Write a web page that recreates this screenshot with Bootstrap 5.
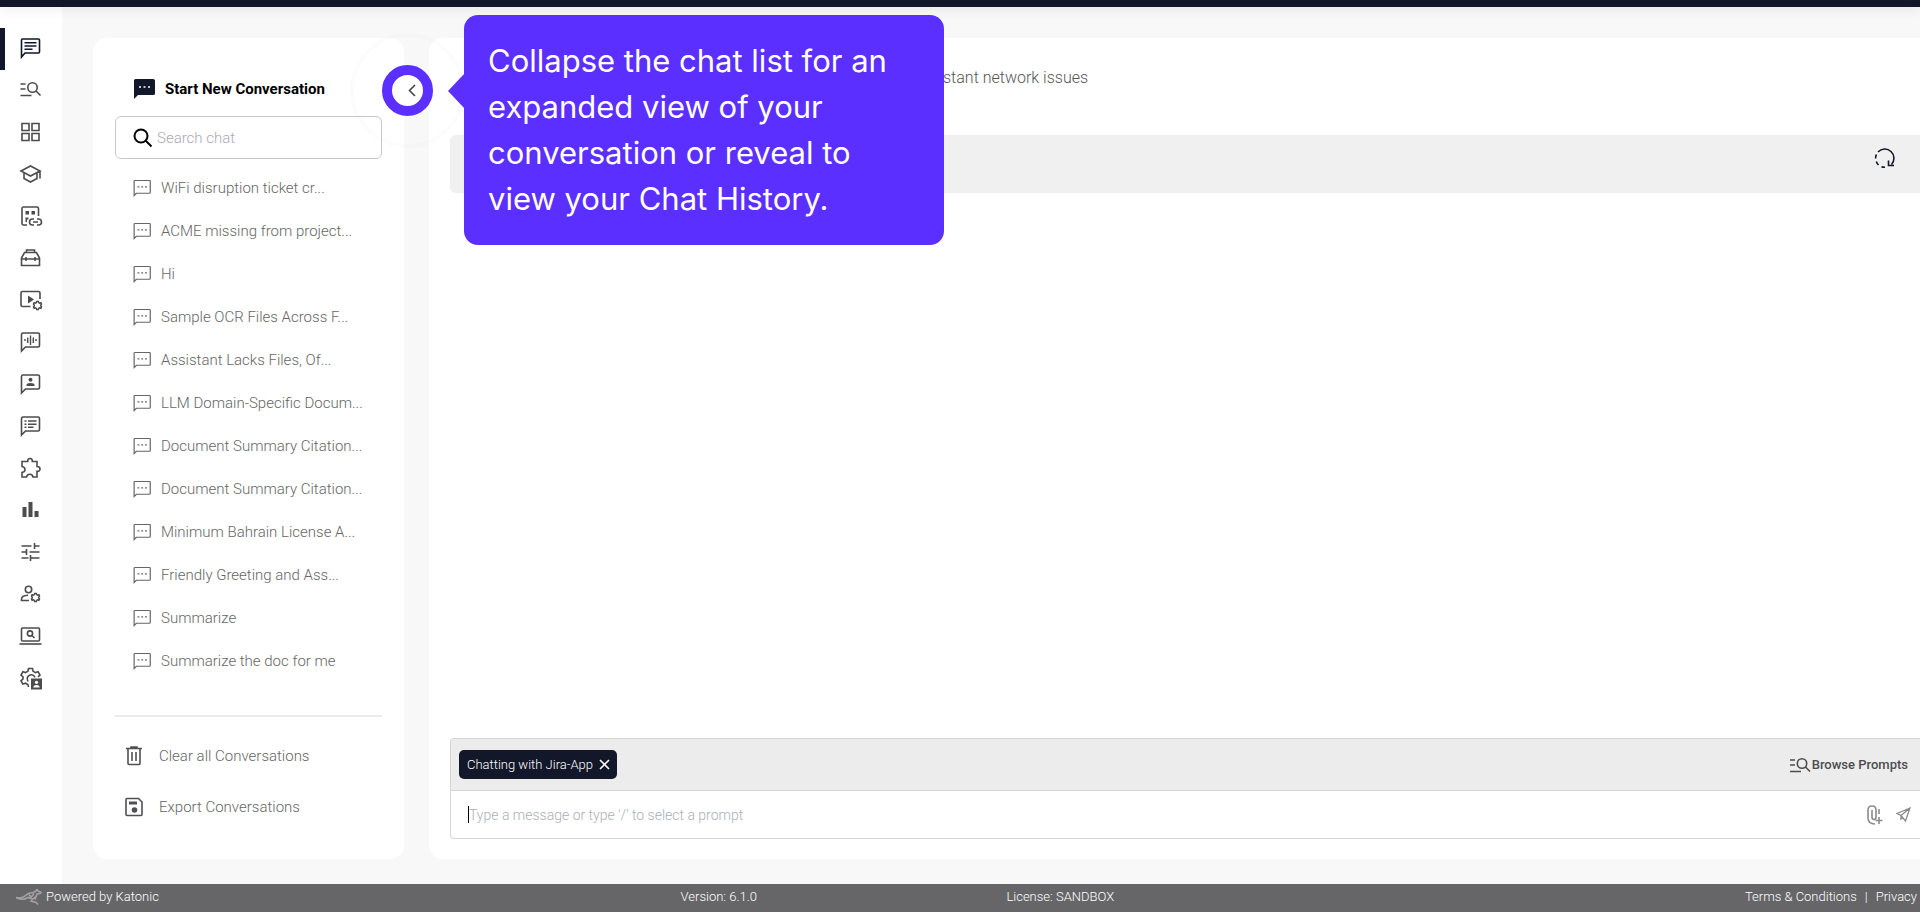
<!DOCTYPE html>
<html lang="en">
<head>
<meta charset="utf-8">
<meta name="viewport" content="width=device-width, initial-scale=1">
<title>Katonic Chat</title>
<link href="https://cdn.jsdelivr.net/npm/bootstrap@5.3.0/dist/css/bootstrap.min.css" rel="stylesheet">
<style>
:root { --ink: #12172a; --accent: #5b2fff; }
body { font-family: Roboto, "Liberation Sans", sans-serif; font-weight: 300; font-size: 15px; line-height: 20px; background: #f8f8f8; color: #555; overflow-x: hidden; }
svg { display: block; flex: none; fill: none; stroke: currentColor; stroke-width: 1.6; }
.fillicon { fill: currentColor; stroke: none; }
.gear { stroke-width: 3.6; }
a, button { color: inherit; text-decoration: none; }
.plain { border: 0; background: none; padding: 0; font-weight: inherit; }
.topbar { height: 7px; background: var(--ink); box-shadow: 0 2px 12px rgba(0,0,0,.09); position: relative; z-index: 1; }
.siderail { width: 62px; padding-top: 21px; color: #4c4c4e; }
.siderail a { height: 42px; padding: 0 0 2px 13px; border-left: 5px solid transparent; }
.siderail a.active { border-left-color: var(--ink); color: var(--ink); }
.workspace { padding: 31px 0 25px 31px; gap: 25px; }
.panel { background: #fff; border-radius: 14px; }
.history { width: 311px; padding: 36px 22px 27px; position: relative; }
.newchat { font-weight: 700; color: #000; padding-left: 19px; gap: 10px; height: 30px; }
.searchbox { margin-top: 12px; height: 43px; border: 1px solid #c8c8c8; border-radius: 6px; padding-left: 17px; gap: 4px; color: #000; }
.searchbox input, .message input { border: 0; outline: 0; background: none; padding: 0; min-width: 0; font-weight: 300; }
.searchbox input::placeholder { color: #a9a9b4; opacity: 1; }
.chats { margin-top: 7px; }
.chats a { height: 43px; padding-left: 18px; gap: 10px; color: #666; }
.tools { border-top: 2px solid #ebebeb; padding: 13px 10px 0; color: #666; }
.tools button { height: 51px; gap: 16px; color: #666; }
.tools svg { color: #505054; }
.collapsebtn { position: absolute; right: -29px; top: 27px; width: 51px; height: 51px; border: 10px solid var(--accent); border-radius: 50%; background: #fff; padding: 0 0 0 8px; color: #444; z-index: 2; }
.collapsebtn::after { content: ""; position: absolute; inset: -42px; border: 4px solid rgba(0,0,0,.012); border-radius: 50%; pointer-events: none; }
.tip { position: absolute; left: 371px; top: -23px; width: 480px; height: 230px; padding: 23px 40px 23px 24px; background: var(--accent); border-radius: 14px; color: #fff; font: 400 31px/46px Inter, sans-serif; z-index: 3; }
.tip::before { content: ""; position: absolute; left: -16px; top: 58px; border: 18px solid transparent; border-left: 0; border-right: 17px solid var(--accent); }
.conversation { border-radius: 14px 0 0 14px; padding: 26px 0 20px 21px; min-width: 0; }
.topic { padding-left: 493px; font-size: 16px; line-height: 28px; color: #555; }
.strip { margin-top: 43px; height: 58px; background: #f0f0f0; border-radius: 6px 0 0 6px; padding: 13px 24px; color: var(--ink); }
.composer { border: 1px solid #d6d6d6; border-right: 0; border-radius: 4px 0 0 4px; overflow: hidden; }
.composehead { background: #ececec; border-bottom: 1px solid #d6d6d6; height: 52px; padding: 0 12px 0 8px; }
.agentchip { background: var(--ink); color: #fff; border-radius: 5px; height: 29px; padding: 0 7px 0 8px; gap: 6px; font-size: 13px; }
.browse { font-size: 13px; font-weight: 500; color: #4c4c4e; gap: 1px; }
.message { height: 47px; padding: 0 9px 0 17px; gap: 13px; color: #8b8b8d; }
.message input { caret-color: #000; font-size: 14px; }
.message input::placeholder { color: #a9afb9; opacity: 1; }
.caretline { width: 1px; height: 17px; background: #000; margin-right: -13px; }
.foot { background: #666668; color: #fff; height: 28px; font-size: 13px; display: grid; grid-template-columns: 35.5% 17% 1fr auto; align-items: center; padding: 0 3px 2px 0; }
</style>
</head>
<body class="min-vh-100 d-flex flex-column">
<svg width="0" height="0" class="position-absolute" aria-hidden="true">
  <symbol id="bubble" viewBox="0 0 24 24"><path d="M3 21V4.500Q3 3 4.500 3H19.500Q21 3 21 4.500V15.500Q21 17 19.500 17H7Z"/></symbol>
  <symbol id="chatdots" viewBox="0 0 24 24"><path d="M1.500 22V3Q1.500 2 2.500 2H22Q23 2 23 3V18Q23 19 22 19H4.500Z"/><path d="M6 10.500h2.500m2.500 0h2.500m2.500 0h2.500"/></symbol>
  <symbol id="findlist" viewBox="0 0 24 24"><path d="M2 6h5M2 11h5M2 17.500h11"/><circle cx="14" cy="9.500" r="4.700"/><path d="M17.500 13 22 17.500"/></symbol>
  <symbol id="cog" viewBox="0 0 24 24"><path d="M10 2h4l.6 3 2.400 1.400 3-1 2 3.400-2.300 2v2.400l2.300 2-2 3.400-3-1-2.400 1.400-.6 3h-4l-.6-3L7 17.600l-3 1-2-3.400 2.300-2v-2.400L2 8.800l2-3.400 3 1L9.400 5Z"/></symbol>
</svg>

<header class="topbar"></header>
<div class="d-flex flex-grow-1">
  <nav class="siderail bg-white flex-shrink-0" aria-label="Main">
    <a href="#" class="active d-flex align-items-center" aria-label="Chat"><svg width="25" height="24" viewBox="0 0 24 24"><path d="M3 21V4Q3 3 4 3H20Q21 3 21 4V16Q21 17 20 17H6.500Z"/><path d="M6 6.800h12M6 10h12M6 13.200h8"/></svg></a>
    <a href="#" class="d-flex align-items-center" aria-label="Prompt search"><svg width="25" height="24"><use href="#findlist"/></svg></a>
    <a href="#" class="d-flex align-items-center" aria-label="Dashboard"><svg width="25" height="24" viewBox="0 0 24 24"><path d="M3.500 3.500h7v7h-7zM13.500 3.500h7v7h-7zM3.500 13.500h7v7h-7zM13.500 13.500h7v7h-7z"/></svg></a>
    <a href="#" class="d-flex align-items-center" aria-label="Learning"><svg width="25" height="24" viewBox="0 0 24 24"><path d="M2.500 9 12 4l9.500 5L12 14ZM5.500 11v5.500L12 20l6.500-3.500V11M21.500 9v7.500"/></svg></a>
    <a href="#" class="d-flex align-items-center" aria-label="Linked apps"><svg width="25" height="24" viewBox="0 0 24 24"><path d="M8.500 21H5Q3.500 21 3.500 19.500V4.500Q3.500 3 5 3H18.500Q20 3 20 4.500V12"/><path d="M7 7h3.500v3.500H7zM13 7h3.500v3.500H13zM7 13.500h3v2H8.500v2.500H7z" class="fillicon"/><path d="M15.500 21H14a3 3 0 0 1 0-6h1.500M18.500 15H20a3 3 0 0 1 0 6h-1.500M14.500 18h5"/></svg></a>
    <a href="#" class="d-flex align-items-center" aria-label="Toolbox"><svg width="25" height="24" viewBox="0 0 24 24"><path d="M3 19.500V12L6 6.500H18L21 12V19.500ZM8 6.500V4h8v2.500M3 13h18M7.500 11v4M16.500 11v4"/></svg></a>
    <a href="#" class="d-flex align-items-center" aria-label="Media settings"><svg width="25" height="24" viewBox="0 0 24 24"><path d="M12 18.500H4Q2.500 18.500 2.500 17V5Q2.500 3.500 4 3.500H20Q21.500 3.500 21.500 5V11"/><path d="M9.500 7.500v8l6-4z" class="fillicon"/><svg class="gear" x="14" y="12" width="10" height="11" viewBox="0 0 24 24"><use href="#cog"/></svg></svg></a>
    <a href="#" class="d-flex align-items-center" aria-label="Voice chat"><svg width="25" height="24" viewBox="0 0 24 24"><use href="#bubble"/><path d="M6.500 9v2M9.200 7.500v5.500M12 5.500v9.500M14.800 7.500v5.500M17.500 9v2" stroke-width="1.400"/></svg></a>
    <a href="#" class="d-flex align-items-center" aria-label="Personas"><svg width="25" height="24" viewBox="0 0 24 24"><use href="#bubble"/><circle cx="12" cy="7.800" r="2" class="fillicon"/><path d="M8 14v-1q0-2 4-2t4 2v1z" class="fillicon"/></svg></a>
    <a href="#" class="d-flex align-items-center" aria-label="Chat logs"><svg width="25" height="24" viewBox="0 0 24 24"><use href="#bubble"/><path d="M6 7h2m1.500 0H18M6 10.200h2m1.500 0H18M6 13.300h2m1.500 0H15"/></svg></a>
    <a href="#" class="d-flex align-items-center" aria-label="Extensions"><svg width="25" height="24" viewBox="0 0 24 24"><path d="M4 5.500H9.200Q9 2.500 11.500 2.500T13.800 5.500H18.500V10.500Q21.500 10.500 21.500 13T18.500 15.200V21H14.500Q14 18.200 11.300 18.200T8 21H3.500V16.500Q6.500 16 6.500 13.500T3.500 10.500V5.500Z"/></svg></a>
    <a href="#" class="d-flex align-items-center" aria-label="Analytics"><svg width="25" height="24" viewBox="0 0 24 24"><path d="M4 9h4v10H4zM10 4h4v15h-4zM16 13h4v6h-4z" class="fillicon"/></svg></a>
    <a href="#" class="d-flex align-items-center" aria-label="Tuning"><svg width="25" height="24" viewBox="0 0 24 24"><path d="M3 6h10M16 6h5M16 3v6M3 12h5M8 9v6M11 12h10M3 18h7M12 18h9M12 15v6"/></svg></a>
    <a href="#" class="d-flex align-items-center" aria-label="User settings"><svg width="25" height="24" viewBox="0 0 24 24"><circle cx="10" cy="7.500" r="3.200"/><path d="M10.500 18.500H3V17Q3 13.500 9.500 13.200"/><svg class="gear" x="12" y="10" width="10" height="11" viewBox="0 0 24 24"><use href="#cog"/></svg></svg></a>
    <a href="#" class="d-flex align-items-center" aria-label="Device search"><svg width="25" height="24" viewBox="0 0 24 24"><rect x="3" y="4" width="18" height="13" rx="1"/><path d="M1 20h22"/><circle cx="11.500" cy="9.500" r="2.600"/><path d="m13.500 11.500 2.500 2.500"/></svg></a>
    <a href="#" class="d-flex align-items-center" aria-label="Admin settings"><svg width="25" height="24" viewBox="0 0 24 24"><path d="M10 21l-.6-2.500L7 17.200l-2.600.8L2.500 14.800l2-1.900v-2l-2-1.900L4.400 5.800 7 6.600l2.400-1.400L10 2.500h4l.6 2.700L17 6.600l2.600-.8L21.500 9l-2 1.900M9.500 15.500Q7.500 11 11 9.300t5.500 2"/><path d="M12.500 12.500h11v11h-11z" class="fillicon"/><circle cx="18" cy="16.300" r="1.600" fill="#fff" stroke="none"/><path d="M14.800 21.500q0-2.500 3.200-2.500t3.200 2.500z" fill="#fff" stroke="none"/></svg></a>
  </nav>

  <div class="workspace d-flex flex-grow-1">
    <aside class="history panel d-flex flex-column flex-shrink-0">
      <button type="button" class="newchat plain d-flex align-items-center fw-bold"><svg width="21" height="20" viewBox="0 0 21 20" color="#12172a"><path d="M0 20V1.500Q0 0 1.500 0H19Q21 0 21 1.500V14.500Q21 16 19 16H4Z" class="fillicon"/><path d="M5 8h2m2.500 0h2m2.500 0h2" stroke="#fff"/></svg>Start New Conversation</button>
      <label class="searchbox d-flex align-items-center"><svg width="20" height="20" viewBox="0 0 20 20"><circle cx="8" cy="8" r="6.500" stroke-width="2"/><path d="m12.500 12.500 6 6" stroke-width="2"/></svg><input type="search" class="flex-grow-1" placeholder="Search chat" aria-label="Search chat"></label>
      <div class="chats d-flex flex-column">
        <a href="#" class="d-flex align-items-center"><svg width="18" height="18"><use href="#chatdots"/></svg>WiFi disruption ticket cr...</a>
        <a href="#" class="d-flex align-items-center"><svg width="18" height="18"><use href="#chatdots"/></svg>ACME missing from project...</a>
        <a href="#" class="d-flex align-items-center"><svg width="18" height="18"><use href="#chatdots"/></svg>Hi</a>
        <a href="#" class="d-flex align-items-center"><svg width="18" height="18"><use href="#chatdots"/></svg>Sample OCR Files Across F...</a>
        <a href="#" class="d-flex align-items-center"><svg width="18" height="18"><use href="#chatdots"/></svg>Assistant Lacks Files, Of...</a>
        <a href="#" class="d-flex align-items-center"><svg width="18" height="18"><use href="#chatdots"/></svg>LLM Domain-Specific Docum...</a>
        <a href="#" class="d-flex align-items-center"><svg width="18" height="18"><use href="#chatdots"/></svg>Document Summary Citation...</a>
        <a href="#" class="d-flex align-items-center"><svg width="18" height="18"><use href="#chatdots"/></svg>Document Summary Citation...</a>
        <a href="#" class="d-flex align-items-center"><svg width="18" height="18"><use href="#chatdots"/></svg>Minimum Bahrain License A...</a>
        <a href="#" class="d-flex align-items-center"><svg width="18" height="18"><use href="#chatdots"/></svg>Friendly Greeting and Ass...</a>
        <a href="#" class="d-flex align-items-center"><svg width="18" height="18"><use href="#chatdots"/></svg>Summarize</a>
        <a href="#" class="d-flex align-items-center"><svg width="18" height="18"><use href="#chatdots"/></svg>Summarize the doc for me</a>
      </div>
      <div class="tools mt-auto">
        <button type="button" class="plain d-flex align-items-center"><svg width="18" height="20" viewBox="0 0 18 20"><path d="M1 2.500h16M6 2V1h6v1M3 3v14.500Q3 18.500 4 18.500H14Q15 18.500 15 17.500V3M7 6v9M11 6v9"/></svg>Clear all Conversations</button>
        <button type="button" class="plain d-flex align-items-center"><svg width="18" height="20" viewBox="0 0 18 20"><path d="M2 1.500H13.500L17 5V17.500Q17 18.500 16 18.500H2Q1 18.500 1 17.500V2.500Q1 1.500 2 1.500Z"/><path d="M4 4.500h8v3H4z" class="fillicon"/><circle cx="9.500" cy="13" r="2.800" class="fillicon"/></svg>Export Conversations</button>
      </div>
      <button type="button" class="collapsebtn d-flex align-items-center justify-content-center" aria-label="Collapse chat list"><svg width="8" height="13" viewBox="0 0 8 13"><path d="M7 1 1.500 6.500 7 12"/></svg></button>
      <div class="tip" role="tooltip">Collapse the chat list for an expanded view of your conversation or reveal to view your Chat History.</div>
    </aside>

    <main class="conversation panel d-flex flex-column flex-grow-1">
      <div class="topic">stant network issues</div>
      <div class="strip d-flex justify-content-end align-items-start"><button type="button" class="plain" aria-label="Refresh"><svg width="22" height="22" viewBox="0 0 22 22"><path d="M4 4A9 9 0 1 1 17.500 16.500M14.500 12.500v5h5.500"/><path d="M2.500 6.500Q1.500 8 1.600 10.500M2.300 13.500Q3 15.500 4.500 17M7.500 18.700Q8.500 19.300 11 19.300"/></svg></button></div>
      <form class="composer mt-auto">
        <div class="composehead d-flex align-items-center justify-content-between">
          <button type="button" class="agentchip border-0 d-flex align-items-center fw-light">Chatting with Jira-App<svg width="11" height="11" viewBox="0 0 11 11"><path d="m1 1 9 9M10 1 1 10"/></svg></button>
          <button type="button" class="browse plain d-flex align-items-center"><svg width="22" height="22" viewBox="1 0 22 22"><use href="#findlist" width="24" height="24"/></svg>Browse Prompts</button>
        </div>
        <div class="message d-flex align-items-center">
          <span class="caretline"></span>
          <input type="text" class="flex-grow-1" placeholder="Type a message or type '/' to select a prompt" aria-label="Message">
          <button type="button" class="plain" aria-label="Attach file"><svg width="16" height="20" viewBox="0 0 16 20"><path d="M8 19Q1 19 1 13V5Q1 1 5 1T9 5V12Q9 14.500 7 14.500T5 12V5M12 4v5M12 12v7M8.500 15.500h7"/></svg></button>
          <button type="button" class="plain" aria-label="Send"><svg width="15" height="15" viewBox="0 0 15 15"><path d="M14 1 1 6.500l4 2L9.500 14ZM14 1 5 8.500V12l1.800-1.500" stroke-width="1.300"/></svg></button>
        </div>
      </form>
    </main>
  </div>
</div>
<footer class="foot">
  <span class="d-flex align-items-center"><svg class="ms-3 me-1" width="26" height="16" viewBox="0 0 26 16" stroke-width="1" color="#a2a2a2"><path d="M0 8.500Q5 10 9 7Q13 3 17 4L20 2 21 0l1 2 3 1.500-1 1-3 .5L20 8l-2 1.500M0 8.500Q7 12 12 8.500L17 10l-2 2 5 1.500 2 2M13 5.500 15 8l3-3M18 8l2 2.500"/></svg>Powered by Katonic</span>
  <span>Version: 6.1.0</span>
  <span>License: SANDBOX</span>
  <span class="text-nowrap"><a href="#">Terms &amp; Conditions</a><span class="px-2">|</span><a href="#">Privacy</a></span>
</footer>
<script src="https://cdn.jsdelivr.net/npm/bootstrap@5.3.0/dist/js/bootstrap.bundle.min.js"></script>
</body>
</html>
